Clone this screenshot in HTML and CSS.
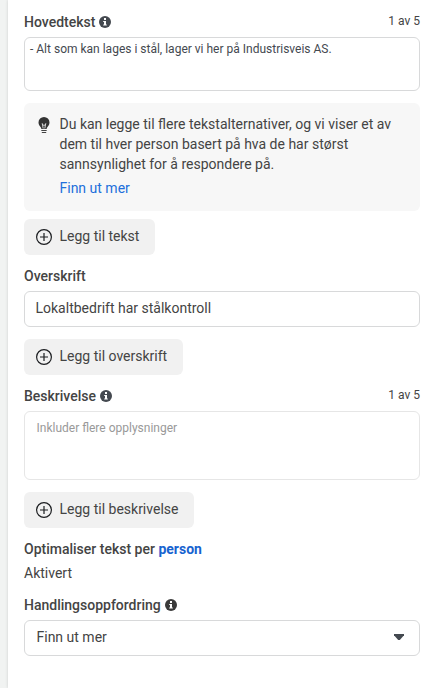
FILE: index.html
```html
<!DOCTYPE html>
<html lang="no">
<head>
  <meta charset="UTF-8">
  <meta name="viewport" content="width=device-width, initial-scale=1.0">
  <title>Annonsetekst</title>
  <link rel="stylesheet" href="styles.css">
</head>
<body>

<svg class="sprite" aria-hidden="true">
  <symbol id="icon-info" viewBox="0 0 12 12">
    <circle cx="6" cy="6" r="6" fill="currentColor"/>
    <path d="M5 2h2v2H5zM4.2 5H7v3.6h.8v1H4.2v-1H5V6h-.8z" fill="#fff"/>
  </symbol>
  <symbol id="icon-plus" viewBox="0 0 16 16">
    <circle cx="8" cy="8" r="7.4" fill="none" stroke="currentColor" stroke-width="1.2"/>
    <path d="M8 4v8M4 8h8" fill="none" stroke="currentColor" stroke-width="1.2"/>
  </symbol>
</svg>

<form class="panel">
  <div class="field-head">
    <label for="text">Hovedtekst</label>
    <svg class="info"><use href="#icon-info"/></svg>
    <span class="count">1 av 5</span>
  </div>
  <textarea class="main-text" id="text">- Alt som kan lages i stål, lager vi her på Industrisveis AS.</textarea>

  <div class="tip">
    <svg class="bulb" viewBox="0 0 12 17">
      <path d="M6 0a5.5 5.5 0 0 0-5.5 5.5c0 2.3 1.3 3.5 2.2 4.7.5.6.6 1 .6 1.8h5.4c0-.8.1-1.2.6-1.8.9-1.2 2.2-2.4 2.2-4.7A5.5 5.5 0 0 0 6 0z" fill="#333"/>
      <path d="M4.2 6.3l1 5.2M7.8 6.3l-1 5.2M4.5 7.3L6 8.6l1.5-1.3" fill="none" stroke="#f7f7f7" stroke-width=".8"/>
      <path d="M3.3 13.5h5.4M3.8 15.5h4.4" fill="none" stroke="#444" stroke-width="1"/>
    </svg>
    <div>
      <p>Du kan legge til flere tekstalternativer, og vi viser et av dem til hver person basert på hva de har størst sannsynlighet for å respondere på.</p>
      <a href="#">Finn ut mer</a>
    </div>
  </div>
  <button class="add-text" type="button"><svg><use href="#icon-plus"/></svg>Legg til tekst</button>

  <div class="field-head">
    <label for="title">Overskrift</label>
  </div>
  <input type="text" id="title" value="Lokaltbedrift har stålkontroll">
  <button class="add-title" type="button"><svg><use href="#icon-plus"/></svg>Legg til overskrift</button>

  <div class="field-head">
    <label for="description">Beskrivelse</label>
    <svg class="info"><use href="#icon-info"/></svg>
    <span class="count">1 av 5</span>
  </div>
  <textarea class="description" id="description" placeholder="Inkluder flere opplysninger"></textarea>
  <button class="add-description" type="button"><svg><use href="#icon-plus"/></svg>Legg til beskrivelse</button>

  <div class="field-head optimize">
    <span>Optimaliser tekst per <a href="#">person</a></span>
  </div>
  <div class="status">Aktivert</div>

  <div class="field-head">
    <span>Handlingsoppfordring</span>
    <svg class="info dark"><use href="#icon-info"/></svg>
  </div>
  <div class="select" role="button" tabindex="0">
    Finn ut mer
    <svg class="caret" viewBox="0 0 10 6"><path d="M0 0h10v1.2L5.8 6H4.2L0 1.2z" fill="#444950"/></svg>
  </div>
</form>

</body>
</html>
```
FILE: styles.css
```css
* {
  box-sizing: border-box;
}

body {
  margin: 0;
  padding-left: 8px;
  background-color: #f1f3f2;
  font-family: Roboto, "Liberation Sans", sans-serif;
  font-size: 14px;
  line-height: 20px;
  color: #444;
}

.sprite {
  display: none;
}

.panel {
  min-height: 100vh;
  padding: 12px 12px 0 16px;
  background-color: #fff;
  box-shadow: 0 0 3px rgba(0, 0, 0, 0.15);
}

.field-head {
  display: flex;
  align-items: center;
  height: 20px;
  margin-bottom: 5px;
  font-weight: 500;
}

.info {
  width: 12px;
  height: 12px;
  margin-left: 4px;
  color: #444950;
}

.info.dark {
  color: #3a3a3a;
}

.count {
  margin-left: auto;
  padding-bottom: 2px;
  font-size: 12px;
  font-weight: 400;
}

textarea,
input[type="text"],
.select {
  display: block;
  width: 100%;
  margin: 0 0 12px;
  border: 1px solid #d8d9da;
  border-radius: 6px;
  background-color: #fff;
  font: inherit;
  color: #444;
}

textarea {
  resize: none;
  font-size: 12px;
  line-height: 16px;
}

.main-text {
  height: 54px;
  padding: 3px 5px;
  color: #444950;
}

.description {
  height: 69px;
  padding: 8px 11.5px;
  border-color: #e6e6e6;
}

.description::placeholder {
  color: #999;
}

input[type="text"] {
  height: 36px;
  padding: 0 10.5px 2px;
}

.tip {
  display: flex;
  gap: 9.5px;
  height: 108px;
  margin-bottom: 8px;
  padding: 11px 14px;
  border-radius: 6px;
  background-color: #f7f7f7;
}

.tip p {
  margin: 0 0 4px;
}

.bulb {
  flex: none;
  width: 12px;
  height: 17px;
  margin-top: 3px;
}

a {
  color: #216fdb;
  text-decoration: none;
}

button {
  display: flex;
  align-items: center;
  gap: 7.5px;
  height: 36px;
  margin: 0 0 11px;
  padding: 0 12px 2px;
  border: none;
  border-radius: 6px;
  background-color: #f1f1f1;
  font: inherit;
  color: #444;
}

button svg {
  flex: none;
  width: 16px;
  height: 16px;
  margin-top: 2px;
  color: #1c1e21;
}

.add-text {
  width: 131px;
}

.add-title {
  width: 159px;
}

.add-description {
  width: 170px;
}

.optimize {
  margin-bottom: 4px;
}

.optimize a {
  font-weight: 700;
  color: #1763cf;
}

.status {
  margin-bottom: 12px;
}

.select {
  display: flex;
  align-items: center;
  justify-content: space-between;
  height: 36px;
  padding: 0 15px 2px 11.5px;
}

.caret {
  width: 10px;
  height: 6px;
}
```
